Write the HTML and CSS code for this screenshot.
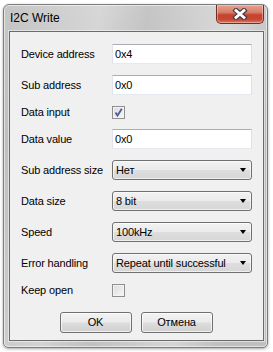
FILE: index.html
```html
<!DOCTYPE html>
<html>
<head>
<meta charset="utf-8">
<link rel="stylesheet" href="styles.css">
</head>
<body>
<div class="window">
  <div class="titlebar">
    <span class="title">I2C Write</span>
    <div class="close">
      <svg width="16" height="12" viewBox="0 0 16 12">
        <path d="M4 2.5 L12 9.5 M12 2.5 L4 9.5" stroke="#3b3b4a" stroke-width="5" stroke-linecap="square" fill="none"/>
        <path d="M4 2.5 L12 9.5 M12 2.5 L4 9.5" stroke="#ffffff" stroke-width="2.8" stroke-linecap="square" fill="none"/>
      </svg>
    </div>
  </div>
  <div class="client">
    <div class="form">
      <span class="lbl">Device address</span><div class="input">0x4</div>
      <span class="lbl">Sub address</span><div class="input">0x0</div>
      <span class="lbl short">Data input</span>
      <div class="cbwrap"><span class="cb"><svg width="11" height="11" viewBox="0 0 11 11"><path d="M2.5 5.5 L4.5 8.5 L8.8 1.8" stroke="#4b5f93" stroke-width="1.8" fill="none"/></svg></span></div>
      <span class="lbl">Data value</span><div class="input">0x0</div>
      <span class="lbl">Sub address size</span><div class="combo"><span>Нет</span><i class="arrow"></i></div>
      <span class="lbl">Data size</span><div class="combo"><span>8 bit</span><i class="arrow"></i></div>
      <span class="lbl">Speed</span><div class="combo"><span>100kHz</span><i class="arrow"></i></div>
      <span class="lbl">Error handling</span><div class="combo"><span>Repeat until successful</span><i class="arrow"></i></div>
      <span class="lbl short">Keep open</span>
      <div class="cbwrap"><span class="cb"></span></div>
    </div>
    <div class="buttons">
      <div class="btn">OK</div>
      <div class="btn">Отмена</div>
    </div>
  </div>
</div>
</body>
</html>
```
FILE: styles.css
```css
html, body {
  margin: 0;
  padding: 0;
  background: #ffffff;
}
body {
  width: 273px;
  height: 352px;
  overflow: hidden;
  font-family: "Liberation Sans", Arial, sans-serif;
  font-size: 11px;
  letter-spacing: -0.15px;
  color: #000;
}
.window {
  margin: 4px 0 0 3px;
  width: 265px;
  height: 344px;
  box-sizing: border-box;
  border: 1px solid #7d7d7d;
  border-radius: 6px 6px 5px 5px;
  padding: 0 3px 6px 5px;
  display: flex;
  flex-direction: column;
  background:
    linear-gradient(100deg, rgba(255,255,255,0) 0%, rgba(255,255,255,0.3) 30%, rgba(255,255,255,0) 45%, rgba(255,255,255,0.35) 70%, rgba(255,255,255,0) 85%),
    linear-gradient(#c6c6c6, #b9b9b9 40%, #c0c0c0);
  box-shadow: inset 0 0 0 1px rgba(255,255,255,0.55), 0 1px 3px rgba(0,0,0,0.35);
}
.titlebar {
  height: 26px;
  display: flex;
  justify-content: space-between;
  align-items: flex-start;
  flex: none;
}
.title {
  margin: 6px 0 0 1px;
  font-size: 12px;
  line-height: 14px;
  letter-spacing: 0;
  color: #000;
}
.close {
  width: 48px;
  height: 19px;
  box-sizing: border-box;
  border: 1px solid #6a3128;
  border-top: none;
  border-radius: 0 0 5px 5px;
  background: linear-gradient(#e6a190 0%, #d9806c 40%, #c5432f 55%, #c84634 80%, #d97b62 100%);
  box-shadow: inset 0 0 0 1px rgba(255,220,210,0.45);
  display: flex;
  align-items: center;
  justify-content: center;
}
.close svg { display: block; margin-top: -1px; }
.client {
  flex: 1;
  border: 1px solid #6b6b6b;
  background: #f0f0f0;
  padding: 12px 11px 0 11px;
  box-shadow: 0 0 0 1px rgba(255,255,255,0.5);
}
.form {
  display: grid;
  grid-template-columns: 91px 140px;
  row-gap: 11px;
  align-items: center;
}
.lbl {
  white-space: nowrap;
  line-height: 14px;
}
.short { height: 12px; line-height: 12px; }
.input {
  height: 20px;
  box-sizing: border-box;
  background: #fff;
  border: 1px solid;
  border-color: #abadb3 #dbdfe6 #e3e9ef #e2e3ea;
  border-radius: 1px;
  padding: 0 0 0 2px;
  line-height: 18px;
}
.combo {
  height: 20px;
  box-sizing: border-box;
  border: 1px solid #707070;
  border-radius: 3px;
  background: linear-gradient(#f2f2f2 0%, #ebebeb 48%, #dedede 52%, #d6d6d6 100%);
  box-shadow: inset 0 0 0 1px rgba(255,255,255,0.6);
  display: flex;
  align-items: center;
  justify-content: space-between;
  padding: 0 5px 0 3px;
}
.arrow {
  width: 0;
  height: 0;
  border-left: 3.5px solid transparent;
  border-right: 3.5px solid transparent;
  border-top: 4px solid #000;
}
.cbwrap {
  height: 12px;
  display: flex;
  align-items: flex-start;
}
.cb {
  width: 13px;
  height: 13px;
  box-sizing: border-box;
  border: 1px solid #8f8f8f;
  background: linear-gradient(135deg, #dcdcdc, #f7f7f7);
  box-shadow: inset 0 0 0 1px #f4f4f4;
  display: flex;
  align-items: center;
  justify-content: center;
}
.cb svg { display: block; }
.buttons {
  margin-top: 16px;
  display: flex;
  justify-content: center;
  gap: 9px;
  padding-right: 1px;
}
.btn {
  width: 72px;
  height: 21px;
  box-sizing: border-box;
  border: 1px solid #707070;
  border-radius: 3px;
  background: linear-gradient(#f2f2f2 0%, #ebebeb 48%, #dddddd 52%, #cfcfcf 100%);
  box-shadow: inset 0 0 0 1px rgba(255,255,255,0.7);
  text-align: center;
  line-height: 19px;
}
```
